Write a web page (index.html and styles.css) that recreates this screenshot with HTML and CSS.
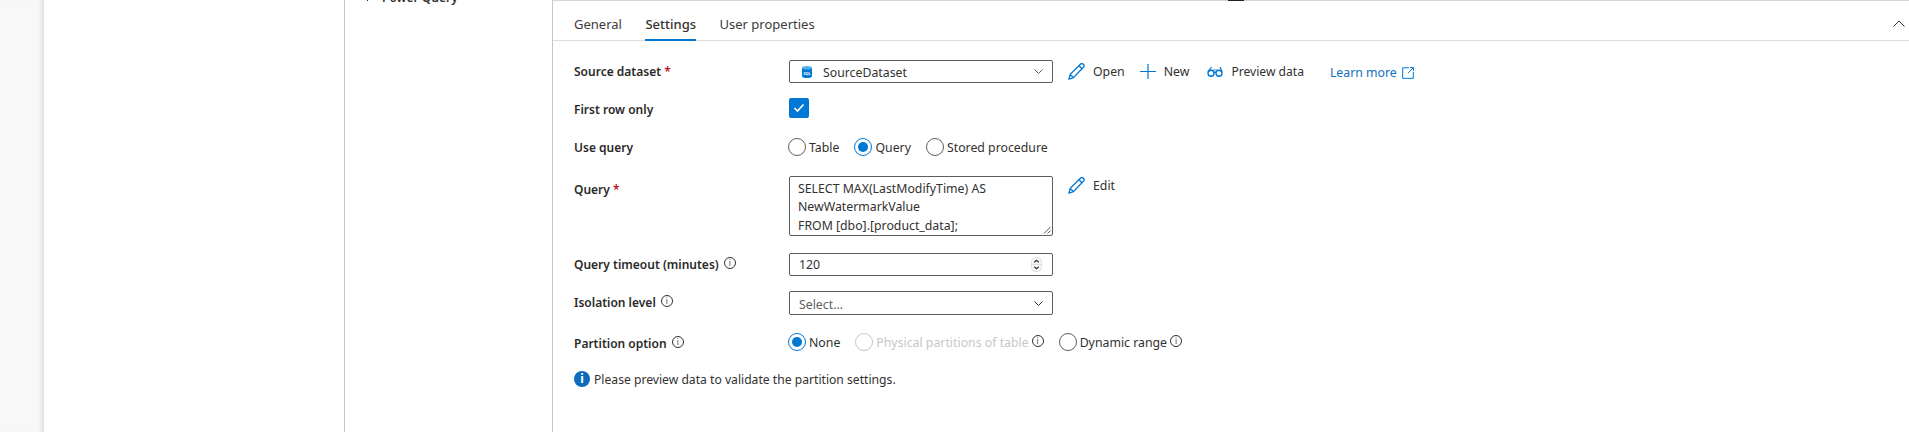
FILE: index.html
```html
<!DOCTYPE html>
<html lang="en">
<head>
    <meta charset="UTF-8">
    <meta name="viewport" content="width=device-width, initial-scale=1.0">
    <title>Lookup settings</title>
    <link rel="stylesheet" href="styles.css">
</head>
<body>
    <div class="app">
        <div class="rail"></div>
        <div class="nav"></div>
        <div class="tree">
            <div class="tree-item">
                <svg class="tree-chevron" width="6" height="10" viewBox="0 0 6 10"><path d="M1 1l4 4-4 4" fill="none" stroke="#323130" stroke-width="1"/></svg>
                <span>Power Query</span>
            </div>
        </div>
        <main class="panel">
            <div class="top-handle"></div>
            <div class="tabs">
                <a class="tab">General</a>
                <a class="tab active">Settings</a>
                <a class="tab">User properties</a>
                <svg class="collapse" width="12" height="7" viewBox="0 0 12 7"><path d="M.5 6.500L6 1l5.500 5.500" fill="none" stroke="#323130" stroke-width="1"/></svg>
            </div>

            <div class="form">
                <div class="row row-source">
                    <label class="label">Source dataset <span class="req">*</span></label>
                    <div class="field select">
                        <svg class="sql-icon" width="10" height="12" viewBox="0 0 10 12">
                            <path d="M0 2v8.200C0 11.200 2.200 12 5 12s5-.8 5-1.800V2z" fill="#0078d4"/>
                            <ellipse cx="5" cy="1.800" rx="5" ry="1.800" fill="#50b0ee"/>
                            <text x="5" y="8.500" font-size="3.800" font-weight="700" fill="#ffffff" text-anchor="middle">SQL</text>
                        </svg>
                        <span class="select-text">SourceDataset</span>
                        <svg class="chevron" width="9" height="5" viewBox="0 0 9 5"><path d="M.5.500l4 4 4-4" fill="none" stroke="#605e5c" stroke-width="1"/></svg>
                    </div>
                    <div class="actions">
                        <a class="action action-open">
                            <svg width="17" height="17" viewBox="0 0 17 17"><path d="M1 16l1.200-4.600L12.400 1.200c.8-.8 2.200-.8 3 .1.8.8.8 2.100 0 2.900L5.400 14.600zM2.200 11.400l3.200 3.200M11 2.800l3.200 3.200" fill="none" stroke="#0078d4" stroke-width="1.300"/></svg>
                            Open
                        </a>
                        <a class="action action-new">
                            <svg width="16" height="16" viewBox="0 0 16 16"><path d="M8 0v15M0 7.500h16" fill="none" stroke="#0078d4" stroke-width="1.200"/></svg>
                            New
                        </a>
                        <a class="action action-preview">
                            <svg width="16" height="11" viewBox="0 0 16 11"><path d="M4.500 1L1 5.500M13 1l2 4.500M6.700 6.600c.7-.5 1.900-.5 2.600 0M1 5.500c4-2 10-2 14 0" fill="none" stroke="#0078d4" stroke-width="1.200"/><circle cx="4" cy="7.300" r="3" fill="none" stroke="#0078d4" stroke-width="1.400"/><circle cx="12" cy="7.300" r="3" fill="none" stroke="#0078d4" stroke-width="1.400"/></svg>
                            Preview data
                        </a>
                        <a class="learn">
                            Learn more
                            <svg width="12" height="12" viewBox="0 0 12 12"><path d="M7 .8H.7v10.500h10.600V5M6 6l5.300-5.300M7.800.6h3.600v3.600" fill="none" stroke="#0078d4" stroke-width="1"/></svg>
                        </a>
                    </div>
                </div>

                <div class="row row-first">
                    <label class="label">First row only</label>
                    <div class="checkbox">
                        <svg width="12" height="10" viewBox="0 0 12 10"><path d="M1.500 5l3 3 6-6.500" fill="none" stroke="#fff" stroke-width="1.600"/></svg>
                    </div>
                </div>

                <div class="row row-usequery">
                    <label class="label">Use query</label>
                    <div class="radios">
                        <span class="radio"><i class="dot"></i>Table</span>
                        <span class="radio on"><i class="dot"></i>Query</span>
                        <span class="radio"><i class="dot"></i>Stored procedure</span>
                    </div>
                </div>

                <div class="row row-query">
                    <label class="label">Query <span class="req">*</span></label>
                    <div class="field textarea">
                        SELECT MAX(LastModifyTime) AS<br>NewWatermarkValue<br>FROM [dbo].[product_data];
                        <svg class="grip" width="8" height="8" viewBox="0 0 8 8"><path d="M1 7.500L7.500 1M4.500 7.500l3-3" fill="none" stroke="#605e5c" stroke-width="1"/></svg>
                    </div>
                    <a class="action action-edit">
                        <svg width="17" height="17" viewBox="0 0 17 17"><path d="M1 16l1.200-4.600L12.400 1.200c.8-.8 2.200-.8 3 .1.8.8.8 2.100 0 2.900L5.400 14.600zM2.200 11.400l3.200 3.200M11 2.800l3.200 3.200" fill="none" stroke="#0078d4" stroke-width="1.300"/></svg>
                        Edit
                    </a>
                </div>

                <div class="row row-timeout">
                    <label class="label">Query timeout (minutes) <i class="info">i</i></label>
                    <div class="field number">
                        <span>120</span>
                        <svg class="spinner" width="11" height="15" viewBox="0 0 11 15"><rect x=".5" y=".5" width="10" height="14" rx="4" fill="#f8f8f8" stroke="#e1dfdd"/><path d="M1 7.500h9" stroke="#e1dfdd" stroke-width="1"/><path d="M3.200 5.200l2.300-2 2.300 2M3.200 9.800l2.300 2 2.300-2" fill="none" stroke="#323130" stroke-width="1.200"/></svg>
                    </div>
                </div>

                <div class="row row-isolation">
                    <label class="label">Isolation level <i class="info">i</i></label>
                    <div class="field select">
                        <span class="select-text placeholder">Select...</span>
                        <svg class="chevron" width="9" height="5" viewBox="0 0 9 5"><path d="M.5.500l4 4 4-4" fill="none" stroke="#323130" stroke-width="1"/></svg>
                    </div>
                </div>

                <div class="row row-partition">
                    <label class="label">Partition option <i class="info">i</i></label>
                    <div class="radios">
                        <span class="radio on"><i class="dot"></i>None</span>
                        <span class="radio disabled"><i class="dot"></i><span class="muted">Physical partitions of table</span> <i class="info">i</i></span>
                        <span class="radio"><i class="dot"></i>Dynamic range <i class="info">i</i></span>
                    </div>
                </div>

                <div class="notice">
                    <i class="notice-icon">i</i>
                    Please preview data to validate the partition settings.
                </div>
            </div>
        </main>
    </div>
</body>
</html>
```

FILE: styles.css
```css
body {
    margin: 0;
    font-family: "Noto Sans", "Open Sans", Arial, sans-serif;
    font-size: 12.3px;
    color: #323130;
    background: #ffffff;
}

.app {
    display: flex;
    height: 432px;
    overflow: hidden;
}

.rail {
    width: 44px;
    flex: none;
    background: #f8f8f8;
    box-shadow: inset -5px 0 5px -3px rgba(0, 0, 0, 0.13);
}

.nav {
    width: 300px;
    flex: none;
    border-right: 1px solid #c8c6c4;
}

.tree {
    width: 207px;
    flex: none;
}

.tree-item {
    display: flex;
    align-items: center;
    gap: 10px;
    margin-top: -13px;
    padding-left: 21px;
    height: 20px;
    font-weight: 600;
    font-size: 12px;
}

.panel {
    flex: 1;
    position: relative;
    border-left: 1px solid #c8c6c4;
    border-top: 1px solid #d8d6d4;
}

.top-handle {
    position: absolute;
    left: 675px;
    top: -1px;
    width: 16px;
    height: 1px;
    background: #222222;
}

/* tabs */
.tabs {
    display: flex;
    gap: 23.5px;
    height: 39px;
    padding-left: 21px;
    border-bottom: 1px solid #dcdcdc;
    position: relative;
}

.tab {
    font-size: 13px;
    line-height: 46px;
    height: 39px;
    color: #3b3a39;
}

.tab.active {
    font-weight: 500;
    color: #323130;
    border-bottom: 2px solid #0078d4;
    height: 38px;
    margin-bottom: -1px;
}

.collapse {
    position: absolute;
    right: 4px;
    top: 19px;
}

/* form */
.form {
    padding: 19px 0 0 21px;
}

.row {
    display: flex;
    align-items: center;
}

.label {
    width: 215px;
    flex: none;
    font-weight: 600;
    font-size: 12px;
    color: #2b2a29;
}

.req {
    color: #c50f1f;
}

.row-source { height: 23px; }
.row-first { height: 20px; margin-top: 15px; }
.row-usequery { height: 18px; margin-top: 20px; }
.row-query { height: 60px; margin-top: 20px; align-items: flex-start; }
.row-timeout { height: 23px; margin-top: 17px; }
.row-isolation { height: 24px; margin-top: 15px; }
.row-partition { height: 18px; margin-top: 18px; }

.row-first .label { padding-top: 2px; }
.row-query .label { padding-top: 5px; }
.row-isolation .label { margin-top: -2px; }
.row-partition .label { padding-top: 2px; }

.field {
    box-sizing: border-box;
    width: 264px;
    flex: none;
    border: 1px solid #605e5c;
    border-radius: 2px;
    background: #ffffff;
    display: flex;
    align-items: center;
}

.select,
.number {
    height: 100%;
    padding: 0 9px;
}

.select-text {
    flex: 1;
    padding-top: 2px;
}

.sql-icon {
    margin: 0 11px 0 3px;
}

.placeholder {
    color: #605e5c;
}

.number {
    justify-content: space-between;
    padding-right: 10px;
}

.textarea {
    display: block;
    position: relative;
    height: 60px;
    padding: 3px 8px;
    line-height: 18.3px;
    overflow: hidden;
}

.grip {
    position: absolute;
    right: 1px;
    bottom: 1px;
}

.actions {
    display: flex;
    align-items: center;
    margin-left: 15px;
}

.action {
    display: inline-flex;
    align-items: center;
    gap: 8px;
}

.action-new { margin-left: 15px; }

.action-preview {
    margin-left: 18px;
    font-size: 12.1px;
}

.action-edit {
    margin: 1px 0 0 15px;
}

.learn {
    display: inline-flex;
    align-items: center;
    gap: 5px;
    margin: 2px 0 0 26px;
    color: #106ebe;
}

.checkbox {
    width: 20px;
    height: 20px;
    border-radius: 2px;
    background: #0078d4;
    display: flex;
    align-items: center;
    justify-content: center;
}

/* radio groups */
.radios {
    display: flex;
    align-items: center;
    gap: 15px;
    margin-left: -1px;
}

.radio {
    display: inline-flex;
    align-items: center;
    gap: 3px;
}

.dot {
    box-sizing: border-box;
    width: 18px;
    height: 18px;
    border: 1px solid #605e5c;
    border-radius: 50%;
    flex: none;
    position: relative;
}

.radio.on .dot {
    border-color: #0078d4;
}

.radio.on .dot::after {
    content: "";
    position: absolute;
    inset: 3px;
    border-radius: 50%;
    background: #0078d4;
}

.muted {
    color: #c8c6c4;
}

.radio.disabled .dot {
    border-color: #c8c6c4;
}

/* small round info marks */
.info {
    box-sizing: border-box;
    display: inline-block;
    width: 12px;
    height: 12px;
    border: 1px solid #323130;
    border-radius: 50%;
    font: normal 8px/10px "Noto Sans", sans-serif;
    text-align: center;
    color: #323130;
    vertical-align: 3px;
    margin-left: 2px;
    flex: none;
}

.radio .info {
    margin: -3px 0 0 0;
}

.notice {
    display: flex;
    align-items: center;
    gap: 4px;
    margin-top: 20px;
    height: 16px;
    font-size: 12.15px;
}

.notice-icon {
    width: 16px;
    height: 16px;
    border-radius: 50%;
    background: #0f6cbd;
    color: #ffffff;
    font: bold 12px/16px "Noto Sans", sans-serif;
    text-align: center;
    flex: none;
}
```
